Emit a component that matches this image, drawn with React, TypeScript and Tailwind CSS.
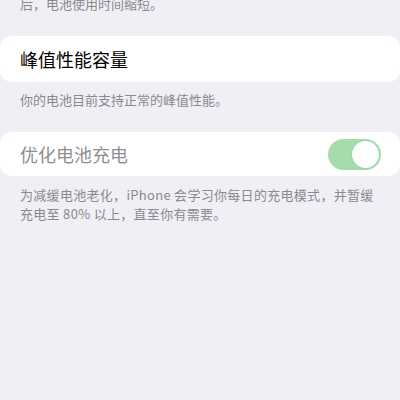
export default function App() {
  return (
    <div
      className="w-[400px] h-[400px] overflow-hidden bg-[#f0eff5] text-black"
      style={{ fontFamily: '"Noto Sans CJK SC", "Noto Sans", sans-serif' }}
    >
      <div className="-mt-[6px] px-5 text-[13px] leading-[19px] text-[#8a8a8e]">
        后，电池使用时间缩短。
      </div>

      <div className="mt-[23px] bg-white rounded-[12px] h-[46px] flex items-center px-5">
        <span className="text-[18px] text-black">峰值性能容量</span>
      </div>
      <p className="px-5 mt-[8px] text-[13px] leading-[19px] text-[#8a8a8e]">
        你的电池目前支持正常的峰值性能。
      </p>

      <div className="mt-[23px] bg-white rounded-[12px] h-[44px] flex items-center justify-between pl-5 pr-[19px]">
        <span className="text-[18px] text-[#8e8e93]">优化电池充电</span>
        <div className="w-[53px] h-[31px] rounded-full bg-[#a6dcac] p-[2px] flex justify-end">
          <div className="w-[27px] h-[27px] rounded-full bg-white shadow-[0_0_0_1px_#9ad6a4]" />
        </div>
      </div>
      <p className="pl-5 pr-4 mt-[9px] text-[13px] leading-[19px] tracking-[0.3px] text-[#8a8a8e]">
        为减缓电池老化，iPhone 会学习你每日的充电模式，并暂缓充电至 80% 以上，直至你有需要。
      </p>
    </div>
  );
}
